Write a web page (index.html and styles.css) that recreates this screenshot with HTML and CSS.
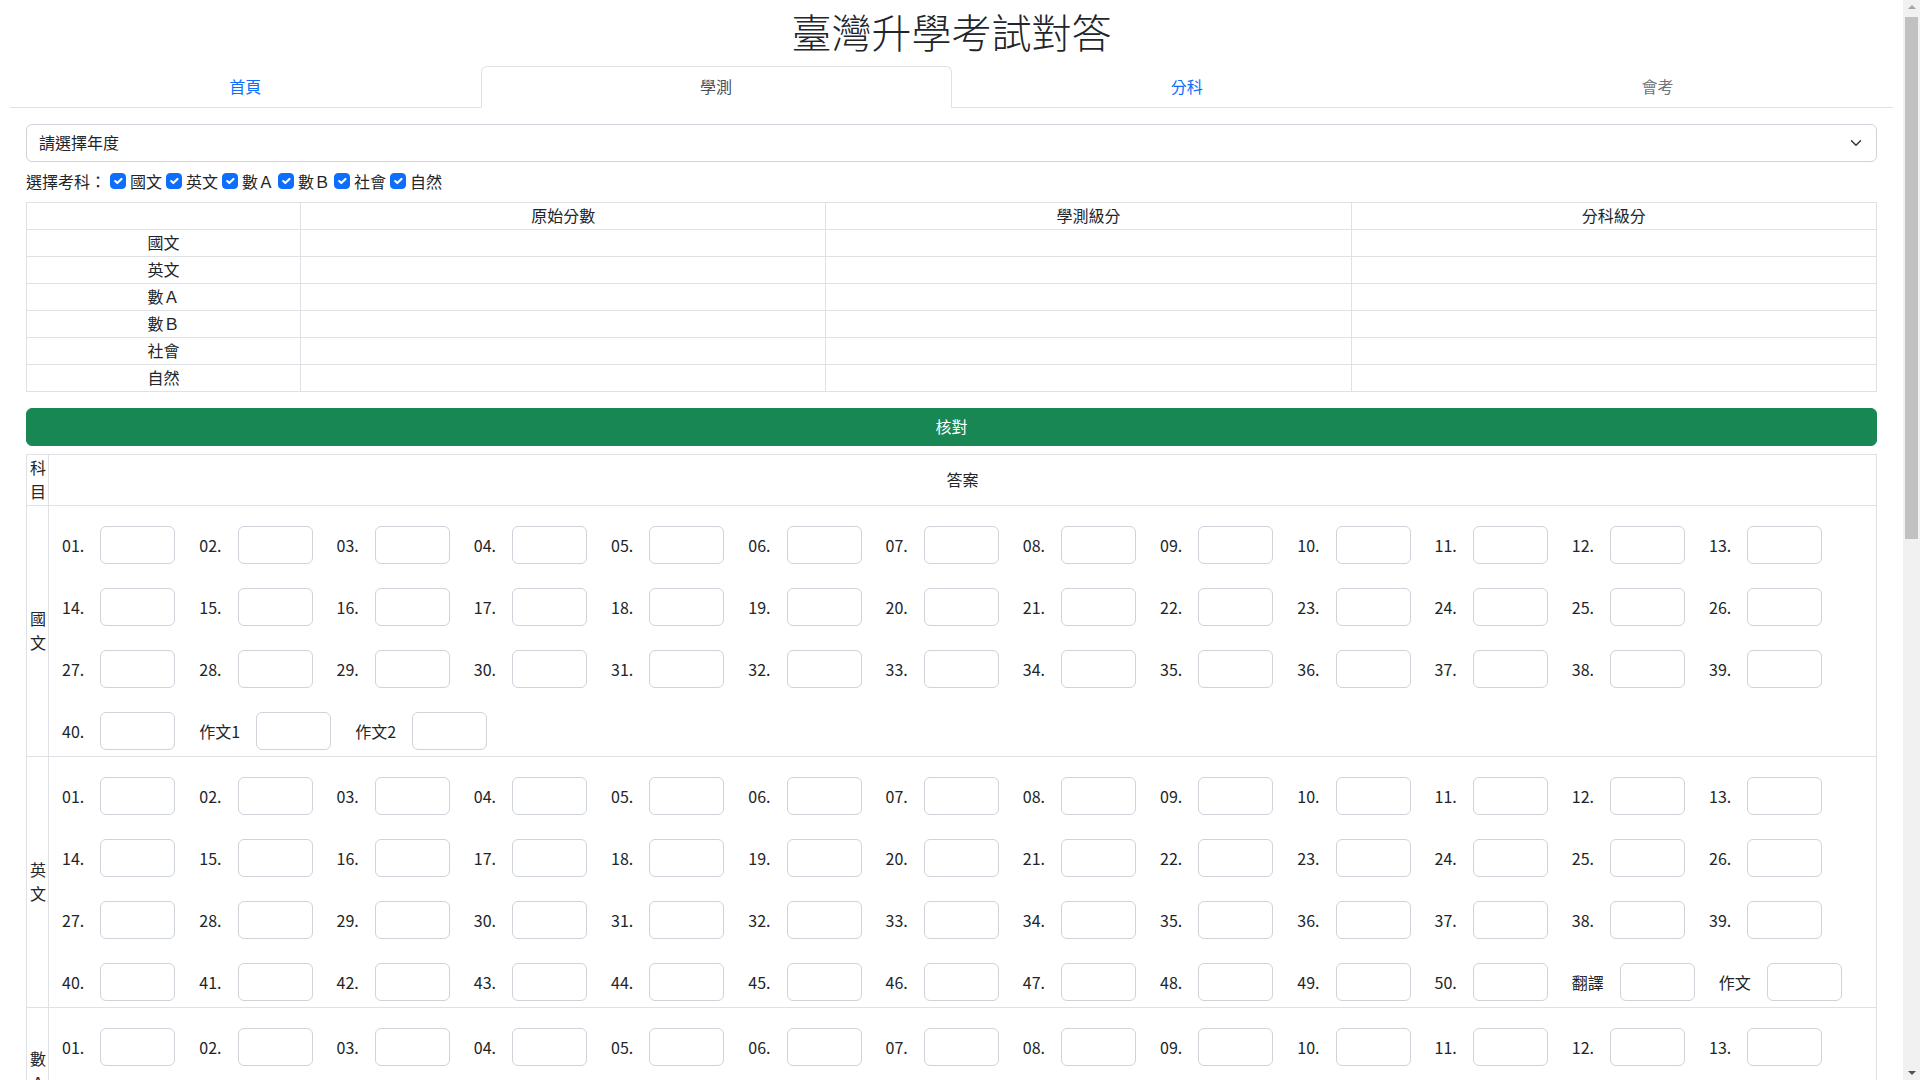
FILE: index.html
```html
<!DOCTYPE html>
<html lang="zh-Hant">
<head>
<meta charset="utf-8">
<title>臺灣升學考試對答</title>
<link rel="stylesheet" href="styles.css">
</head>
<body>
<h1 class="title">臺灣升學考試對答</h1>
<ul class="tabs">
  <li class="tab"><a class="tab-link">首頁</a></li>
  <li class="tab"><a class="tab-link active">學測</a></li>
  <li class="tab"><a class="tab-link">分科</a></li>
  <li class="tab"><a class="tab-link disabled">會考</a></li>
</ul>
<main class="content">
  <select class="year-select"><option>請選擇年度</option></select>
  <div class="subject-pick">
    <span class="pick-title">選擇考科：</span>
    <label class="chk"><input type="checkbox" checked>國文</label>
    <label class="chk"><input type="checkbox" checked>英文</label>
    <label class="chk"><input type="checkbox" checked>數Ａ</label>
    <label class="chk"><input type="checkbox" checked>數Ｂ</label>
    <label class="chk"><input type="checkbox" checked>社會</label>
    <label class="chk"><input type="checkbox" checked>自然</label>
  </div>
  <table class="score-table">
    <colgroup><col class="c-first"><col><col><col></colgroup>
    <thead>
      <tr><th></th><th>原始分數</th><th>學測級分</th><th>分科級分</th></tr>
    </thead>
    <tbody>
      <tr><td>國文</td><td></td><td></td><td></td></tr>
      <tr><td>英文</td><td></td><td></td><td></td></tr>
      <tr><td>數Ａ</td><td></td><td></td><td></td></tr>
      <tr><td>數Ｂ</td><td></td><td></td><td></td></tr>
      <tr><td>社會</td><td></td><td></td><td></td></tr>
      <tr><td>自然</td><td></td><td></td><td></td></tr>
    </tbody>
  </table>
  <button class="check-btn" type="button">核對</button>
  <table class="answer-table">
    <colgroup><col class="c-subj"><col></colgroup>
    <thead>
      <tr><th class="subj">科目</th><th class="ans-head">答案</th></tr>
    </thead>
    <tbody>
      <tr>
        <td class="subj">國文</td>
        <td class="answers">
          <div class="q-row">
            <label class="q"><span class="qn">01.</span><input class="ans" type="text"></label>
            <label class="q"><span class="qn">02.</span><input class="ans" type="text"></label>
            <label class="q"><span class="qn">03.</span><input class="ans" type="text"></label>
            <label class="q"><span class="qn">04.</span><input class="ans" type="text"></label>
            <label class="q"><span class="qn">05.</span><input class="ans" type="text"></label>
            <label class="q"><span class="qn">06.</span><input class="ans" type="text"></label>
            <label class="q"><span class="qn">07.</span><input class="ans" type="text"></label>
            <label class="q"><span class="qn">08.</span><input class="ans" type="text"></label>
            <label class="q"><span class="qn">09.</span><input class="ans" type="text"></label>
            <label class="q"><span class="qn">10.</span><input class="ans" type="text"></label>
            <label class="q"><span class="qn">11.</span><input class="ans" type="text"></label>
            <label class="q"><span class="qn">12.</span><input class="ans" type="text"></label>
            <label class="q"><span class="qn">13.</span><input class="ans" type="text"></label>
          </div>
          <div class="q-row">
            <label class="q"><span class="qn">14.</span><input class="ans" type="text"></label>
            <label class="q"><span class="qn">15.</span><input class="ans" type="text"></label>
            <label class="q"><span class="qn">16.</span><input class="ans" type="text"></label>
            <label class="q"><span class="qn">17.</span><input class="ans" type="text"></label>
            <label class="q"><span class="qn">18.</span><input class="ans" type="text"></label>
            <label class="q"><span class="qn">19.</span><input class="ans" type="text"></label>
            <label class="q"><span class="qn">20.</span><input class="ans" type="text"></label>
            <label class="q"><span class="qn">21.</span><input class="ans" type="text"></label>
            <label class="q"><span class="qn">22.</span><input class="ans" type="text"></label>
            <label class="q"><span class="qn">23.</span><input class="ans" type="text"></label>
            <label class="q"><span class="qn">24.</span><input class="ans" type="text"></label>
            <label class="q"><span class="qn">25.</span><input class="ans" type="text"></label>
            <label class="q"><span class="qn">26.</span><input class="ans" type="text"></label>
          </div>
          <div class="q-row">
            <label class="q"><span class="qn">27.</span><input class="ans" type="text"></label>
            <label class="q"><span class="qn">28.</span><input class="ans" type="text"></label>
            <label class="q"><span class="qn">29.</span><input class="ans" type="text"></label>
            <label class="q"><span class="qn">30.</span><input class="ans" type="text"></label>
            <label class="q"><span class="qn">31.</span><input class="ans" type="text"></label>
            <label class="q"><span class="qn">32.</span><input class="ans" type="text"></label>
            <label class="q"><span class="qn">33.</span><input class="ans" type="text"></label>
            <label class="q"><span class="qn">34.</span><input class="ans" type="text"></label>
            <label class="q"><span class="qn">35.</span><input class="ans" type="text"></label>
            <label class="q"><span class="qn">36.</span><input class="ans" type="text"></label>
            <label class="q"><span class="qn">37.</span><input class="ans" type="text"></label>
            <label class="q"><span class="qn">38.</span><input class="ans" type="text"></label>
            <label class="q"><span class="qn">39.</span><input class="ans" type="text"></label>
          </div>
          <div class="q-row">
            <label class="q"><span class="qn">40.</span><input class="ans" type="text"></label>
            <label class="q"><span class="qt">作文1</span><input class="ans" type="text"></label>
            <label class="q"><span class="qt">作文2</span><input class="ans" type="text"></label>
          </div>
        </td>
      </tr>
      <tr>
        <td class="subj">英文</td>
        <td class="answers">
          <div class="q-row">
            <label class="q"><span class="qn">01.</span><input class="ans" type="text"></label>
            <label class="q"><span class="qn">02.</span><input class="ans" type="text"></label>
            <label class="q"><span class="qn">03.</span><input class="ans" type="text"></label>
            <label class="q"><span class="qn">04.</span><input class="ans" type="text"></label>
            <label class="q"><span class="qn">05.</span><input class="ans" type="text"></label>
            <label class="q"><span class="qn">06.</span><input class="ans" type="text"></label>
            <label class="q"><span class="qn">07.</span><input class="ans" type="text"></label>
            <label class="q"><span class="qn">08.</span><input class="ans" type="text"></label>
            <label class="q"><span class="qn">09.</span><input class="ans" type="text"></label>
            <label class="q"><span class="qn">10.</span><input class="ans" type="text"></label>
            <label class="q"><span class="qn">11.</span><input class="ans" type="text"></label>
            <label class="q"><span class="qn">12.</span><input class="ans" type="text"></label>
            <label class="q"><span class="qn">13.</span><input class="ans" type="text"></label>
          </div>
          <div class="q-row">
            <label class="q"><span class="qn">14.</span><input class="ans" type="text"></label>
            <label class="q"><span class="qn">15.</span><input class="ans" type="text"></label>
            <label class="q"><span class="qn">16.</span><input class="ans" type="text"></label>
            <label class="q"><span class="qn">17.</span><input class="ans" type="text"></label>
            <label class="q"><span class="qn">18.</span><input class="ans" type="text"></label>
            <label class="q"><span class="qn">19.</span><input class="ans" type="text"></label>
            <label class="q"><span class="qn">20.</span><input class="ans" type="text"></label>
            <label class="q"><span class="qn">21.</span><input class="ans" type="text"></label>
            <label class="q"><span class="qn">22.</span><input class="ans" type="text"></label>
            <label class="q"><span class="qn">23.</span><input class="ans" type="text"></label>
            <label class="q"><span class="qn">24.</span><input class="ans" type="text"></label>
            <label class="q"><span class="qn">25.</span><input class="ans" type="text"></label>
            <label class="q"><span class="qn">26.</span><input class="ans" type="text"></label>
          </div>
          <div class="q-row">
            <label class="q"><span class="qn">27.</span><input class="ans" type="text"></label>
            <label class="q"><span class="qn">28.</span><input class="ans" type="text"></label>
            <label class="q"><span class="qn">29.</span><input class="ans" type="text"></label>
            <label class="q"><span class="qn">30.</span><input class="ans" type="text"></label>
            <label class="q"><span class="qn">31.</span><input class="ans" type="text"></label>
            <label class="q"><span class="qn">32.</span><input class="ans" type="text"></label>
            <label class="q"><span class="qn">33.</span><input class="ans" type="text"></label>
            <label class="q"><span class="qn">34.</span><input class="ans" type="text"></label>
            <label class="q"><span class="qn">35.</span><input class="ans" type="text"></label>
            <label class="q"><span class="qn">36.</span><input class="ans" type="text"></label>
            <label class="q"><span class="qn">37.</span><input class="ans" type="text"></label>
            <label class="q"><span class="qn">38.</span><input class="ans" type="text"></label>
            <label class="q"><span class="qn">39.</span><input class="ans" type="text"></label>
          </div>
          <div class="q-row">
            <label class="q"><span class="qn">40.</span><input class="ans" type="text"></label>
            <label class="q"><span class="qn">41.</span><input class="ans" type="text"></label>
            <label class="q"><span class="qn">42.</span><input class="ans" type="text"></label>
            <label class="q"><span class="qn">43.</span><input class="ans" type="text"></label>
            <label class="q"><span class="qn">44.</span><input class="ans" type="text"></label>
            <label class="q"><span class="qn">45.</span><input class="ans" type="text"></label>
            <label class="q"><span class="qn">46.</span><input class="ans" type="text"></label>
            <label class="q"><span class="qn">47.</span><input class="ans" type="text"></label>
            <label class="q"><span class="qn">48.</span><input class="ans" type="text"></label>
            <label class="q"><span class="qn">49.</span><input class="ans" type="text"></label>
            <label class="q"><span class="qn">50.</span><input class="ans" type="text"></label>
            <label class="q"><span class="qt">翻譯</span><input class="ans" type="text"></label>
            <label class="q"><span class="qt">作文</span><input class="ans" type="text"></label>
          </div>
        </td>
      </tr>
      <tr>
        <td class="subj">數Ａ</td>
        <td class="answers">
          <div class="q-row">
            <label class="q"><span class="qn">01.</span><input class="ans" type="text"></label>
            <label class="q"><span class="qn">02.</span><input class="ans" type="text"></label>
            <label class="q"><span class="qn">03.</span><input class="ans" type="text"></label>
            <label class="q"><span class="qn">04.</span><input class="ans" type="text"></label>
            <label class="q"><span class="qn">05.</span><input class="ans" type="text"></label>
            <label class="q"><span class="qn">06.</span><input class="ans" type="text"></label>
            <label class="q"><span class="qn">07.</span><input class="ans" type="text"></label>
            <label class="q"><span class="qn">08.</span><input class="ans" type="text"></label>
            <label class="q"><span class="qn">09.</span><input class="ans" type="text"></label>
            <label class="q"><span class="qn">10.</span><input class="ans" type="text"></label>
            <label class="q"><span class="qn">11.</span><input class="ans" type="text"></label>
            <label class="q"><span class="qn">12.</span><input class="ans" type="text"></label>
            <label class="q"><span class="qn">13.</span><input class="ans" type="text"></label>
          </div>
          <div class="q-row">
            <label class="q"><span class="qn">14.</span><input class="ans" type="text"></label>
            <label class="q"><span class="qn">15.</span><input class="ans" type="text"></label>
            <label class="q"><span class="qn">16.</span><input class="ans" type="text"></label>
            <label class="q"><span class="qn">17.</span><input class="ans" type="text"></label>
            <label class="q"><span class="qn">18.</span><input class="ans" type="text"></label>
            <label class="q"><span class="qn">19.</span><input class="ans" type="text"></label>
            <label class="q"><span class="qn">20.</span><input class="ans" type="text"></label>
          </div>
        </td>
      </tr>
    </tbody>
  </table>
</main>
<div class="scrollbar" aria-hidden="true">
  <span class="sb-arrow sb-up"></span>
  <span class="sb-thumb"></span>
  <span class="sb-arrow sb-down"></span>
</div>
</body>
</html>
```

FILE: styles.css
```css
* {
  box-sizing: border-box;
}

html {
  overflow-y: scroll;
}

body {
  margin: 0 17px 0 0;
  font-family: "Noto Sans CJK TC", "Noto Sans", sans-serif;
  font-size: 16px;
  line-height: 1.5;
  color: #212529;
  background: #fff;
}

.title {
  margin: 7px 0 11px;
  font-size: 40px;
  line-height: 48px;
  font-weight: 300;
  text-align: center;
}

.tabs {
  display: flex;
  list-style: none;
  margin: 0 10px;
  padding: 0;
  border-bottom: 1px solid #dee2e6;
}

.tab {
  flex: 1 1 0;
  margin-bottom: -1px;
}

.tab-link {
  display: block;
  text-align: center;
  padding: 7px 16px 9px;
  font-size: 16px;
  line-height: 24px;
  color: #0d6efd;
  border: 1px solid transparent;
  border-top-left-radius: 6px;
  border-top-right-radius: 6px;
  cursor: pointer;
}

.tab-link.active {
  color: #495057;
  background: #fff;
  border-color: #dee2e6 #dee2e6 #fff;
}

.tab-link.disabled {
  color: #6c757d;
}

.content {
  padding: 16px 26px 0;
}

.year-select {
  display: block;
  width: 100%;
  height: 38px;
  padding: 5px 36px 7px 12px;
  font-family: inherit;
  font-size: 16px;
  line-height: 24px;
  color: #212529;
  background-color: #fff;
  background-image: url("data:image/svg+xml,%3csvg xmlns='http://www.w3.org/2000/svg' viewBox='0 0 16 16'%3e%3cpath fill='none' stroke='%23343a40' stroke-linecap='round' stroke-linejoin='round' stroke-width='2' d='m2 5 6 6 6-6'/%3e%3c/svg%3e");
  background-repeat: no-repeat;
  background-position: right 12px center;
  background-size: 16px 12px;
  border: 1px solid #ced4da;
  border-radius: 6px;
  appearance: none;
  -webkit-appearance: none;
}

.subject-pick {
  display: flex;
  align-items: center;
  margin: 7px 0 9px;
  line-height: 24px;
}

.chk {
  display: flex;
  align-items: center;
}

.chk input {
  appearance: none;
  -webkit-appearance: none;
  width: 16px;
  height: 16px;
  margin: 0 4px;
  border-radius: 4px;
  background-color: #0d6efd;
  background-image: url("data:image/svg+xml,%3csvg xmlns='http://www.w3.org/2000/svg' viewBox='0 0 20 20'%3e%3cpath fill='none' stroke='%23fff' stroke-linecap='round' stroke-linejoin='round' stroke-width='3' d='m6 10 3 3 6-6'/%3e%3c/svg%3e");
  background-size: 100% 100%;
  border: 1px solid #0d6efd;
}

.score-table {
  width: 100%;
  border-collapse: collapse;
  table-layout: fixed;
  margin: 0 0 16px;
}

.c-first {
  width: 274px;
}

.score-table th,
.score-table td {
  border: 1px solid #dee2e6;
  padding: 0 4px 2px;
  height: 27px;
  line-height: 24px;
  text-align: center;
  font-weight: 400;
}

.check-btn {
  display: block;
  width: 100%;
  height: 38px;
  margin: 0 0 8px;
  padding: 5px 12px 7px;
  font-family: inherit;
  font-size: 16px;
  line-height: 24px;
  color: #fff;
  background: #198754;
  border: 1px solid #198754;
  border-radius: 6px;
}

.answer-table {
  width: 100%;
  border-collapse: collapse;
  table-layout: fixed;
}

.c-subj {
  width: 22px;
}

.answer-table th,
.answer-table td {
  border: 1px solid #dee2e6;
  font-weight: 400;
  line-height: 24px;
  vertical-align: middle;
}

.answer-table .subj {
  padding: 0 3px 2px;
  text-align: center;
  word-break: break-all;
}

.ans-head {
  text-align: center;
  padding: 0 4px 2px;
}

.answers {
  padding: 20px 0 6px 13px;
}

.q-row {
  display: flex;
  align-items: center;
  height: 38px;
}

.q-row + .q-row {
  margin-top: 24px;
}

.q {
  display: flex;
  align-items: center;
  margin-right: 24px;
  flex: none;
}

.qn {
  width: 22.25px;
  margin-right: 16px;
  white-space: nowrap;
}

.qt {
  margin-right: 16px;
  white-space: nowrap;
}

.ans {
  width: 75px;
  height: 38px;
  padding: 6px 12px;
  font-family: inherit;
  font-size: 16px;
  border: 1px solid #ced4da;
  border-radius: 6px;
  background: #fff;
}

/* imitation of the browser's vertical scrollbar seen in the reference */
.scrollbar {
  position: fixed;
  top: 0;
  right: 0;
  width: 17px;
  height: 100vh;
  background: #f1f1f1;
}

.sb-thumb {
  position: absolute;
  top: 17px;
  left: 2px;
  right: 2px;
  height: 522px;
  background: #c1c1c1;
}

.sb-arrow {
  position: absolute;
  left: 5px;
  width: 0;
  height: 0;
  border-left: 4px solid transparent;
  border-right: 4px solid transparent;
}

.sb-up {
  top: 5px;
  border-bottom: 4px solid #a3a3a3;
}

.sb-down {
  bottom: 5px;
  border-top: 4px solid #505050;
}
```
